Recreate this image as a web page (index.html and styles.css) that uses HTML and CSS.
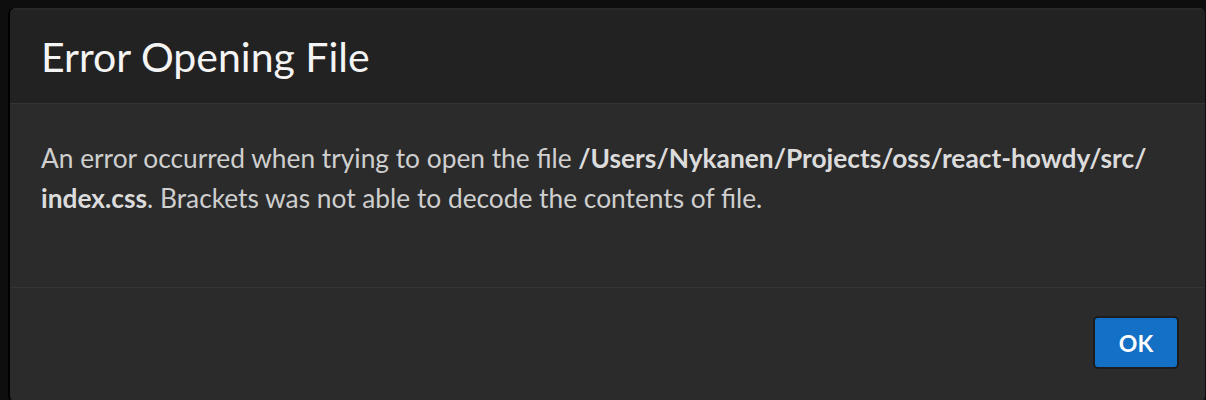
FILE: index.html
```html
<!DOCTYPE html>
<html lang="en">
<head>
<meta charset="utf-8">
<title>Error Opening File</title>
<link rel="stylesheet" href="styles.css">
</head>
<body>
<div class="dialog">
  <div class="dialog-header">
    <h1 class="dialog-title">Error Opening File</h1>
  </div>
  <div class="dialog-body">
    <p class="dialog-message">An error occurred when trying to open the file <span class="path">/Users/Nykanen/Projects/oss/react-howdy/src/<br>index.css</span>. Brackets was not able to decode the contents of file.</p>
  </div>
  <div class="dialog-footer">
    <button class="btn btn-primary" type="button">OK</button>
  </div>
</div>
</body>
</html>
```
FILE: styles.css
```css
html, body {
  margin: 0;
  height: 400px;
  overflow: hidden;
  background: #0e0e0e;
}
body {
  box-sizing: border-box;
  padding: 8px 1px 0 10px;
  font-family: "Lato", "Noto Sans", sans-serif;
}
.dialog {
  height: 394px;
  background: #2b2b2b;
  border-radius: 6px;
  box-shadow: -2px 0 0 #000;
  display: flex;
  flex-direction: column;
  overflow: hidden;
}
.dialog-header {
  box-sizing: border-box;
  height: 95px;
  background: #222222;
  border-top: 2px solid #2a2a2a;
  padding-left: 31px;
  display: flex;
  align-items: center;
}
.dialog-title {
  margin: 0;
  font-size: 41px;
  font-weight: 400;
  color: #f4f4f4;
}
.dialog-body {
  box-sizing: border-box;
  height: 184px;
  border-top: 1px solid #353535;
  padding: 34px 10px 0 31px;
}
.dialog-message {
  margin: 0;
  font-size: 26.3px;
  line-height: 40px;
  color: #cfcfcf;
}
.path {
  font-weight: 700;
  color: #dcdcdc;
}
.dialog-footer {
  flex: 1;
  border-top: 1px solid #353535;
  display: flex;
  justify-content: flex-end;
  align-items: flex-start;
  padding: 28px 26px 0 0;
}
.btn {
  width: 86px;
  height: 53px;
  border-radius: 5px;
  font-family: inherit;
  font-size: 23px;
  font-weight: 700;
  cursor: pointer;
}
.btn-primary {
  background: #1470c4;
  border: 2px solid #1c1c1c;
  color: #ffffff;
}
```
